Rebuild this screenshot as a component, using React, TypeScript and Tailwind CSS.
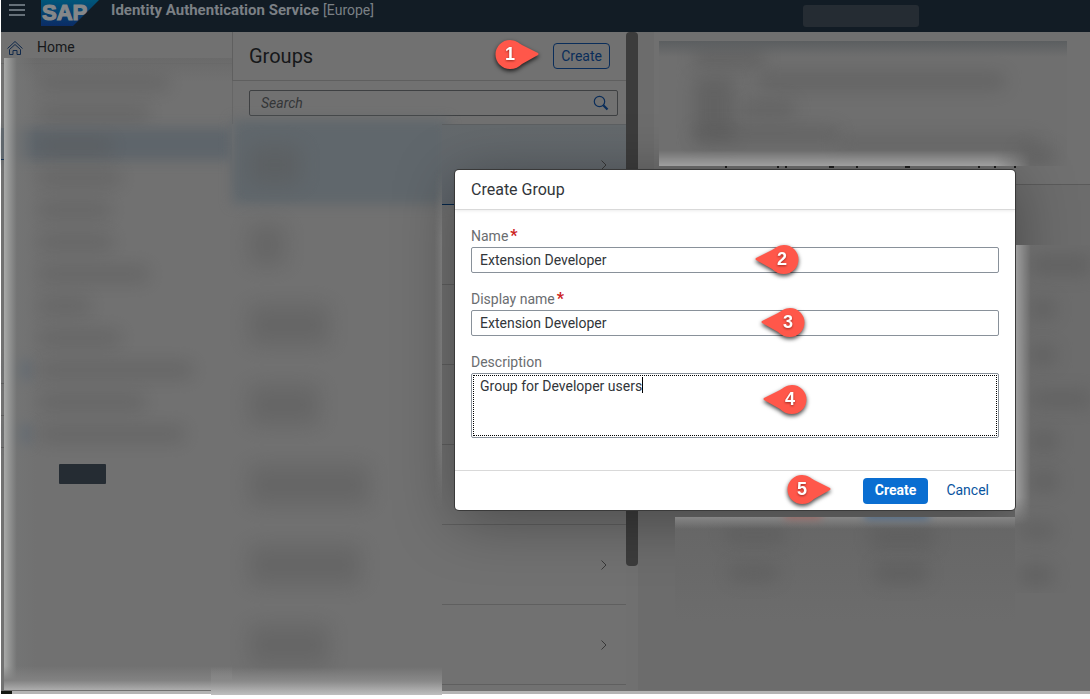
import React from "react";

type Side = "left" | "right";

function Pin({ n, point }: { n: number; point: Side }) {
  const right = point === "right";
  const cx = right ? 17 : 31;
  const d = right
    ? "M17 2 C22 2 26 5 29 7 L45 15 Q46 16 45 17 L29 26 C26 29 22 31 17 31 A14.5 14.5 0 0 1 17 2 Z"
    : "M33 2 C28 2 24 5 21 7 L5 15 Q4 16 5 17 L21 26 C24 29 28 31 33 31 A14.5 14.5 0 0 0 33 2 Z";
  return (
    <svg
      width="50"
      height="36"
      viewBox="0 0 50 36"
      className="pointer-events-none shrink-0 drop-shadow-[0_2px_2px_rgba(0,0,0,0.75)]"
      role="img"
      aria-label={`Step ${n}`}
    >
      <path d={d} fill="#ff574a" />
      <text
        x={cx}
        y="23"
        textAnchor="middle"
        fill="#7d1d16"
        opacity="0.8"
        className="font-['Liberation_Sans',sans-serif] text-[18px] font-bold"
        aria-hidden="true"
        filter="blur(1px)"
      >
        {n}
      </text>
      <text
        x={cx}
        y="22"
        textAnchor="middle"
        fill="#ffffff"
        className="font-['Liberation_Sans',sans-serif] text-[18px] font-bold"
      >
        {n}
      </text>
    </svg>
  );
}

function SapLogo() {
  return (
    <svg width="58" height="26" viewBox="0 0 58 26" role="img" aria-label="SAP" className="block overflow-visible">
      <defs>
        <linearGradient id="sap" x1="0" y1="0" x2="0" y2="1">
          <stop offset="0" stopColor="#00567a" />
          <stop offset="1" stopColor="#0b2c66" />
        </linearGradient>
      </defs>
      <path d="M0 0H58L32 26H0Z" fill="url(#sap)" />
      <text
        x="1"
        y="20"
        fill="#858789"
        stroke="#858789"
        strokeWidth="1.2"
        className="font-['Liberation_Sans',sans-serif] text-[22px] font-bold"
      >
        SAP
      </text>
    </svg>
  );
}

function Chevron() {
  return (
    <svg width="8" height="12" viewBox="0 0 8 12" fill="none" stroke="#383838" aria-hidden="true">
      <path d="M1.5 1.5 L6 6 L1.5 10.5" />
    </svg>
  );
}

const navRows = [
  { w: "w-[128px]" },
  { w: "w-[108px]" },
  { w: "w-[72px]", selected: true },
  { w: "w-[80px]" },
  { w: "w-[70px]" },
  { w: "w-[72px]" },
  { w: "w-[108px]" },
  { w: "w-[50px]" },
  { w: "w-[80px]" },
  { w: "w-[152px]", icon: true },
  { w: "w-[104px]" },
  { w: "w-[144px]", icon: true },
];

const groupRows = [
  { w: "w-[52px]", selected: true, arrow: true },
  { w: "w-[36px]" },
  { w: "w-[80px]" },
  { w: "w-[70px]" },
  { w: "w-[120px]" },
  { w: "w-[112px]", arrow: true },
  { w: "w-[80px]", arrow: true },
];

const upperSmudges = [
  "left-[35px] top-[6px] w-[70px] h-5",
  "left-[100px] top-[32px] w-[245px] h-4",
  "left-[35px] top-[36px] w-[40px] h-16",
  "left-[85px] top-[60px] w-[50px] h-4",
  "left-[35px] top-[86px] w-[145px] h-4",
  "left-[180px] top-[96px] w-[200px] h-3",
  "left-[360px] top-[106px] w-[36px] h-5",
];

const rightSmudges = [
  "left-[16px] top-[10px] w-[60px] h-5",
  "left-[16px] top-[54px] w-[24px] h-5",
  "left-[16px] top-[100px] w-[24px] h-5",
  "left-[16px] top-[146px] w-[60px] h-4",
  "left-[16px] top-[186px] w-[26px] h-5",
  "left-[16px] top-[226px] w-[26px] h-5",
  "left-[4px] top-[278px] w-[36px] h-4",
  "left-[4px] top-[320px] w-[34px] h-5",
];

const lowerSmudges = [
  "left-[50px] top-[10px] w-[60px] h-4",
  "left-[195px] top-[10px] w-[64px] h-5",
  "left-[55px] top-[48px] w-[48px] h-4",
  "left-[200px] top-[46px] w-[52px] h-5",
];

function Smudges({ items }: { items: string[] }) {
  return (
    <>
      {items.map((c) => (
        <span key={c} className={`absolute bg-[#565656] opacity-50 blur-[9px] ${c}`} />
      ))}
    </>
  );
}

function Field({
  id,
  label,
  value,
  pin,
  pinClass,
}: {
  id: string;
  label: string;
  value: string;
  pin: number;
  pinClass: string;
}) {
  return (
    <div className="flex flex-col">
      <label htmlFor={id} className="h-[21px] text-[14px] leading-5 text-[#6a6d70]">
        {label}
        <span className="ml-0.5 text-[16px] font-bold leading-4 text-[#cc2222]">*</span>
      </label>
      <div className="relative">
        <input
          id={id}
          type="text"
          required
          defaultValue={value}
          className="block h-[26px] w-full rounded-[2px] border border-[#89919a] bg-white px-2 text-[14px] text-[#32363a] outline-none"
        />
        <div className={`pointer-events-none absolute -top-1 ${pinClass}`}>
          <Pin n={pin} point="left" />
        </div>
      </div>
    </div>
  );
}

export default function App() {
  return (
    <div className="relative flex min-h-screen flex-col overflow-hidden bg-white pb-[5px] pl-px font-['Roboto','Liberation_Sans',sans-serif] text-[14px]">
      <header className="flex h-8 items-start bg-[#121c25] pl-2">
        <button type="button" aria-label="Menu" className="h-5 w-4">
          <svg width="16" height="20" viewBox="0 0 16 20" stroke="#667079" strokeWidth="2" aria-hidden="true">
            <path d="M0 5H16M0 10H16M0 15H16" />
          </svg>
        </button>
        <div className="ml-4">
          <SapLogo />
        </div>
        <h1 className="ml-3 text-[15px] font-bold leading-5 text-[#7b8085]">Identity Authentication Service</h1>
        <span className="ml-1 leading-5 text-[#7b8085]">[Europe]</span>
        <div className="mr-[171px] mt-[5px] ml-auto h-[22px] w-[116px] rounded-[3px] bg-[#252c33]" />
      </header>

      <main className="relative flex flex-1 bg-[#6c6c6c]">
        <nav className="relative w-[231px] shrink-0 bg-[#717171]">
          <a
            href="#home"
            className="flex h-8 items-center gap-[14px] border-b border-[#666666] pl-1.5 text-[14px] text-[#16181a]"
          >
            <svg width="16" height="16" viewBox="0 0 16 16" fill="none" stroke="#10294b" aria-hidden="true">
              <path d="M0.5 8.5 L8 1.5 L15.5 8.5" />
              <path d="M2.5 9.5 L8 4.5 L13.5 9.5 V14.5 H10 V10.5 H6 V14.5 H2.5 Z" />
            </svg>
            Home
          </a>
          {navRows.map((r, i) => (
            <div key={i} className="relative flex h-8">
              {r.selected && <span className="absolute inset-y-0 left-1 right-0 bg-[#5e656b] blur-[6px]" />}
              <span
                className={`w-[3px] shrink-0 border-b ${
                  r.selected
                    ? "border-[#04264a] bg-[#62686d]"
                    : r.icon || i > 9
                      ? "border-[#5c5c5c]"
                      : "border-transparent"
                }`}
              />
              <div className="relative flex flex-1 items-center pt-1">
                <span className={`ml-1.5 h-5 w-5 shrink-0 blur-[6px] ${r.icon ? "bg-[#5d6670]" : ""}`} />
                <span className={`ml-2.5 h-4 bg-[#575757] opacity-45 blur-[9px] ${r.w}`} />
              </div>
            </div>
          ))}
          <div className="ml-[58px] mt-4 h-5 w-[47px] rounded-[1px] bg-[#252c33]" />
          <div className="absolute left-[3px] right-0 top-[26px] h-6 bg-linear-to-b from-[#6a6a6a] to-[#6c6c6c]/0" />
          <div className="absolute bottom-0 left-[3px] top-[26px] w-8 bg-linear-to-r from-[#a8a9a8] via-[#747575]/80 via-40% to-[#717171]/0" />
          <div className="absolute bottom-0 left-[3px] right-0 h-6 bg-linear-to-t from-[#adadad] via-[#828282] via-40% to-[#717171]/0" />
        </nav>

        <section className="relative w-[394px] shrink-0 bg-[#717171]">
          <div className="flex h-[49px] items-center border-b border-l border-[#5f5f5f] pl-4 pr-4">
            <h2 className="text-[20px] text-[#16181a]">Groups</h2>
            <div className="ml-auto mr-2.5">
              <Pin n={1} point="right" />
            </div>
            <button
              type="button"
              className="h-[26px] rounded-[4px] border border-[#0a2d5a] px-[7px] text-[14px] text-[#0a2d5a]"
            >
              Create
            </button>
          </div>
          <div className="h-[43px] border-l border-[#666666] pl-4 pr-2 pt-[9px]">
            <div className="flex h-[26px] items-center rounded-[2px] border border-[#3e4042] pl-[11px] pr-2">
              <input
                type="text"
                aria-label="Search"
                placeholder="Search"
                className="min-w-0 flex-1 bg-transparent text-[14px] italic outline-none placeholder:text-[#343638]"
              />
              <svg width="16" height="16" viewBox="0 0 16 16" fill="none" stroke="#0a2d5a" aria-hidden="true">
                <circle cx="6.5" cy="6.5" r="5.2" strokeWidth="1.2" />
                <path d="M10.3 10.3 L14.5 14.5" strokeWidth="2.2" />
              </svg>
            </div>
          </div>
          <ul>
            {groupRows.map((r, i) => (
              <li key={i} className={`relative flex ${r.selected ? "h-[81px]" : "h-20"}`}>
                {r.selected && (
                  <span className="absolute -top-1 left-0 h-[84px] w-[216px] bg-[#60676c] blur-[6px]" />
                )}
                <div className="relative flex w-[210px] shrink-0 items-center pl-[17px]">
                  <span className={`h-10 bg-[#585858] opacity-45 blur-[11px] ${r.w}`} />
                </div>
                <div
                  className={`relative flex flex-1 items-center justify-end border-b pr-[18px] ${
                    r.selected
                      ? "border-t border-b-[#04264a] border-t-[#5c5f61] bg-linear-to-b from-[#64696c] to-[#60666c]"
                      : "border-[#5f5f5f]"
                  }`}
                >
                  {r.arrow && <Chevron />}
                </div>
              </li>
            ))}
          </ul>
          <div className="absolute -bottom-[5px] -left-[21px] z-10 h-[28px] w-[231px] bg-linear-to-t from-[#bfbfbf] via-[#898989] via-50% to-[#717171]/0" />
        </section>

        <div className="w-3 shrink-0 bg-[#707070]">
          <div className="h-[534px] rounded-[4px] bg-[#3c3c3c]" />
        </div>

        <section className="flex-1 pl-4">
          <div className="h-[153px] border-b border-[#5a5a5a] bg-[#707070]" />
        </section>
      </main>
      <div className="flex h-1 border-t border-[#707070] bg-[#b4b4b4]">
        <span className="w-[11px] bg-[#141812]" />
      </div>

      <div className="absolute inset-0 flex items-start pl-[455px] pt-[170px]">
        <div className="relative w-[560px] rounded-[4px] shadow-[0_10px_60px_rgba(0,0,0,0.35)]">
          <svg
            className="absolute -top-[5px] left-[269px]"
            width="296"
            height="3"
            viewBox="0 0 296 3"
            stroke="#1b1b1b"
            strokeWidth="2"
            aria-hidden="true"
          >
            <path d="M1 2h2M53 2h2M61 2h2M105 2h5M132 2h2M181 2h5M254 2h2M270 2h2M290 2h2" />
          </svg>
          <div className="absolute -top-[129px] left-[204px] h-[125px] w-[408px] overflow-hidden bg-[#6f6f6f]">
            <Smudges items={upperSmudges} />
            <span className="absolute inset-x-0 top-0 h-4 bg-linear-to-b from-[#5b5e60] to-[#6f6f6f]/0" />
            <span className="absolute bottom-0 left-0 right-9 h-4 mask-r-from-90% bg-linear-to-t from-[#a0a0a0] to-[#6f6f6f]/0" />
          </div>
          <div className="absolute left-[560px] top-[75px] h-[348px] w-[75px] overflow-hidden bg-[#6c6c6c]">
            <Smudges items={rightSmudges} />
            <span className="absolute left-0 top-0 h-[280px] w-4 mask-b-from-90% bg-linear-to-r from-[#a0a0a0] to-[#6c6c6c]/0" />
          </div>
          <div className="absolute left-[220px] top-[347px] h-[104px] w-[340px] overflow-hidden bg-linear-to-b from-[#666666] to-[#6c6c6c]">
            <Smudges items={lowerSmudges} />
            <span className="absolute inset-x-0 top-0 h-3 bg-linear-to-b from-[#868686] to-[#686868]/0" />
            <span className="absolute -top-2 left-[110px] h-2.5 w-9 bg-[#a35a54] opacity-70 blur-[4px]" />
            <span className="absolute -top-2 left-[190px] h-2.5 w-16 bg-[#3f6389] opacity-80 blur-[4px]" />
          </div>
          <div className="absolute -left-[21px] top-0 h-[340px] w-2 mask-y-from-80% bg-linear-to-r from-[#717171]/0 to-[#797979]" />

          <form
            role="dialog"
            aria-labelledby="dialog-title"
            onSubmit={(e: React.FormEvent) => e.preventDefault()}
            className="relative rounded-[4px] bg-white ring-1 ring-[#3a3a3a]"
          >
            <div className="flex h-10 items-center border-b border-[#d9d9d9] px-4 shadow-[0_1px_3px_rgba(0,0,0,0.08)]">
              <h2 id="dialog-title" className="text-[16px] text-[#32363a]">
                Create Group
              </h2>
            </div>
            <div className="flex flex-col gap-4 px-4 pb-8 pt-4">
              <Field id="name" label="Name" value="Extension Developer" pin={2} pinClass="left-[280px]" />
              <Field
                id="display-name"
                label="Display name"
                value="Extension Developer"
                pin={3}
                pinClass="left-[286px]"
              />
              <div className="flex flex-col">
                <label htmlFor="description" className="h-[21px] text-[14px] leading-5 text-[#6a6d70]">
                  Description
                </label>
                <div className="relative">
                  <textarea
                    id="description"
                    defaultValue="Group for Developer users"
                    className="block h-[65px] w-full resize-none rounded-[2px] border border-[#89919a] bg-white px-2 py-[2px] text-[14px] leading-5 text-[#32363a] outline-1 -outline-offset-3 outline-dotted outline-black"
                  />
                  <span className="absolute left-[171px] top-1 h-4 w-px bg-black" />
                  <div className="pointer-events-none absolute left-[288px] top-[10px]">
                    <Pin n={4} point="left" />
                  </div>
                </div>
              </div>
            </div>
            <div className="flex h-10 items-center justify-end gap-2 border-t border-[#d9d9d9] pr-4">
              <div className="mr-5">
                <Pin n={5} point="right" />
              </div>
              <button
                type="submit"
                className="h-[26px] rounded-[4px] bg-[#0a6ed1] px-3 text-[14px] font-bold text-white"
              >
                Create
              </button>
              <button type="button" className="h-[26px] rounded-[4px] px-[10px] text-[14px] text-[#0854a0]">
                Cancel
              </button>
            </div>
          </form>
        </div>
      </div>
    </div>
  );
}
